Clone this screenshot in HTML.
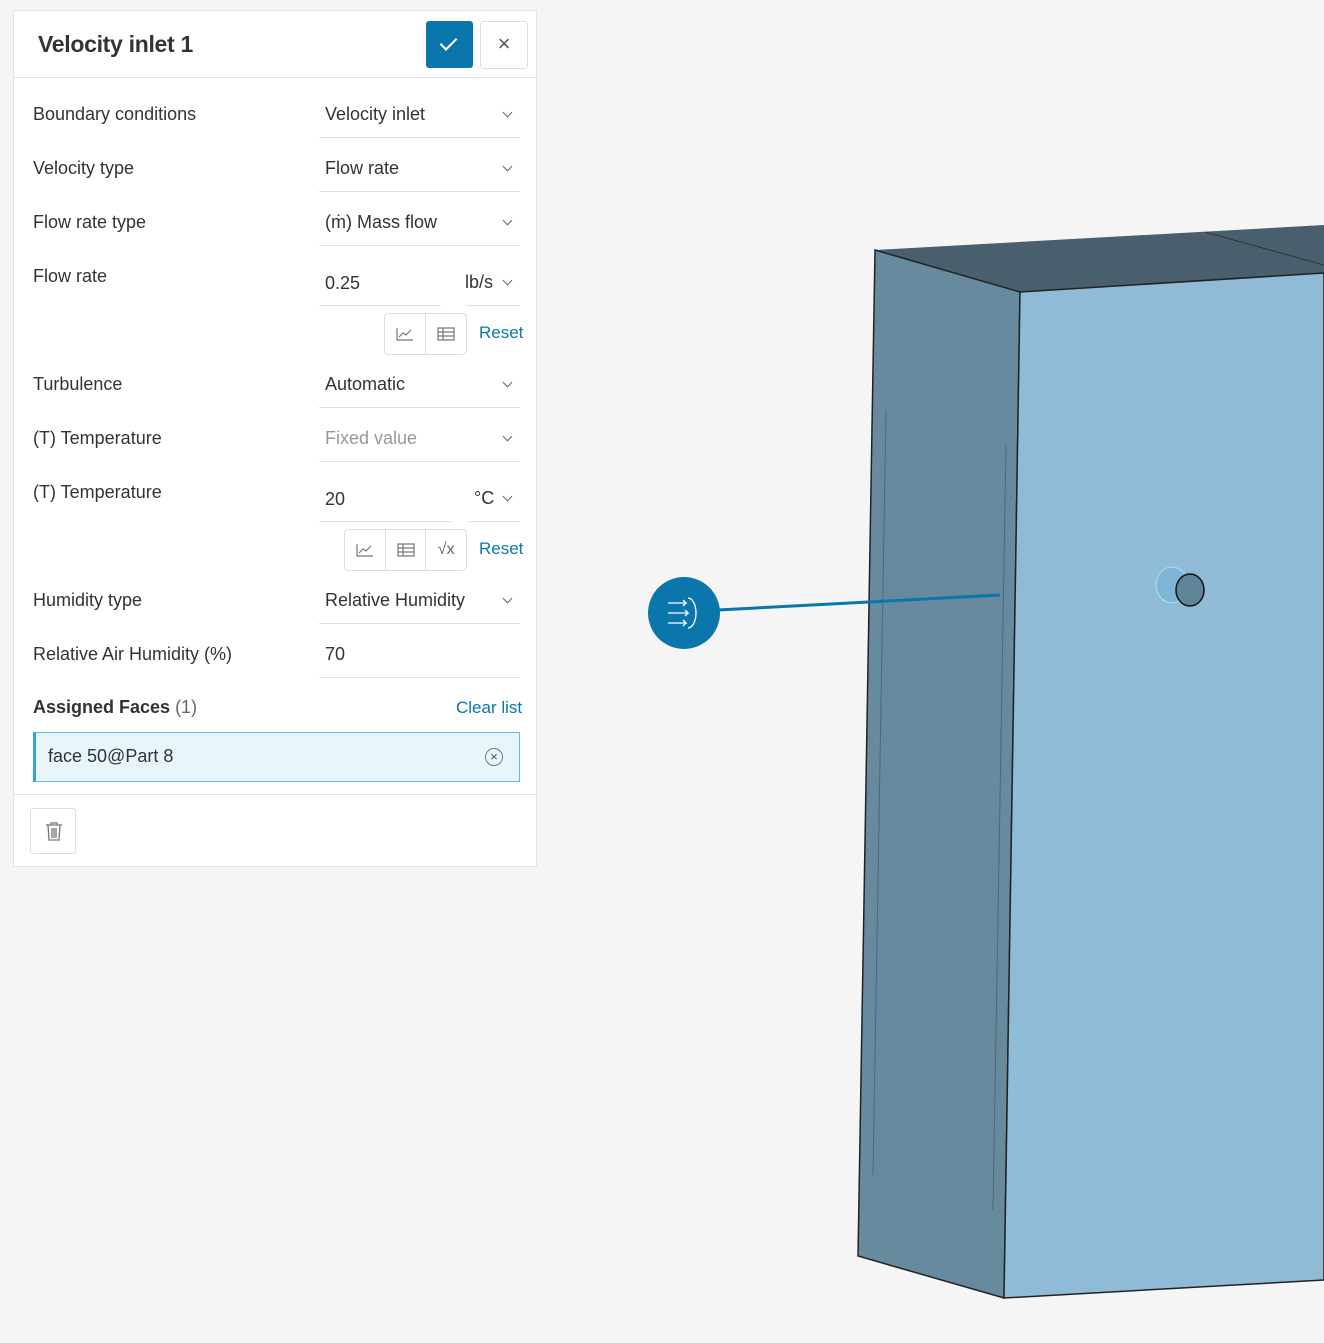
<!DOCTYPE html>
<html><head><style>
body{margin:0;width:1324px;height:1343px;background:#f5f5f5;font-family:"Liberation Sans",sans-serif;position:relative;overflow:hidden;color:#333}
.p{position:absolute;left:13px;top:10px;width:524px;height:857px;background:#fff;border:1px solid #e4e4e4;box-sizing:border-box}
.a{position:absolute;white-space:nowrap}
.l{left:19px;font-size:18px;color:#333}
.v{left:311px;font-size:18px;color:#333}
.u{position:absolute;height:1px;background:#e0e0e0}
.ch{position:absolute;width:6px;height:6px;border-right:1.3px solid #666;border-bottom:1.3px solid #666;transform:rotate(45deg)}
.bg{position:absolute;border:1px solid #ddd;border-radius:4px;height:40px;display:flex}
.bg div{width:40px;border-right:1px solid #ddd;display:flex;align-items:center;justify-content:center;color:#666;font-size:14px}
.bg div:last-child{border-right:none}
.r{color:#0a76ab;font-size:17px}
</style></head><body>
<svg style="position:absolute;left:0;top:0" width="1324" height="1343">
<polygon points="875,250 1324,225 1324,273 1020,292" fill="#4a5f6e"/>
<line x1="1205" y1="232" x2="1324" y2="265" stroke="#333" stroke-width="1"/>
<polygon points="875,250 1020,292 1004,1298 858,1256" fill="#678a9e" stroke="#222" stroke-width="1.5"/>
<polygon points="1020,292 1324,273 1324,1280 1004,1298" fill="#8fbbd7" stroke="#222" stroke-width="1.5"/>
<line x1="886" y1="410" x2="873" y2="1175" stroke="#4d6878"/>
<line x1="1006" y1="445" x2="993" y2="1210" stroke="#4d6878"/>
<line x1="718" y1="610" x2="1000" y2="595" stroke="#0a76ab" stroke-width="3"/>
<circle cx="684" cy="613" r="36" fill="#0a76ab"/>
<g stroke="#fff" fill="none" stroke-width="1.3"><path d="M668 603h18l-3-3M683 606l3-3M668 613h20l-3-3M685 616l3-3M668 623h18l-3-3M683 626l3-3"/><path d="M688 598a8 15 0 0 1 0 30"/></g>
<ellipse cx="1172" cy="585" rx="16" ry="18" fill="#6fb2d8" fill-opacity=".5" stroke="#b8dcef"/>
<ellipse cx="1190" cy="590" rx="14" ry="16" fill="#5f8498" stroke="#111" stroke-width="1.5"/>
</svg>
<div class="p">
<div class="a" style="left:24px;top:20px;font-size:23px;font-weight:bold;color:#333;letter-spacing:-0.3px">Velocity inlet 1</div>
<div class="a" style="left:412px;top:10px;width:47px;height:47px;background:#0a76ab;border-radius:3px"><div class="ch" style="left:18px;top:13px;width:7px;height:14px;border-color:#fff;border-width:0 2px 2px 0"></div></div>
<div class="a" style="left:466px;top:10px;width:46px;height:46px;border:1px solid #ddd;border-radius:3px;font-size:22px;color:#555;text-align:center;line-height:44px">×</div>
<div class="u" style="left:0;top:66px;width:522px"></div>

<div class="a l" style="top:93px">Boundary conditions</div><div class="a v" style="top:93px">Velocity inlet</div><div class="u" style="left:305px;top:126px;width:201px"></div><div class="ch" style="left:490px;top:98px"></div>
<div class="a l" style="top:147px">Velocity type</div><div class="a v" style="top:147px">Flow rate</div><div class="u" style="left:305px;top:180px;width:201px"></div><div class="ch" style="left:490px;top:152px"></div>
<div class="a l" style="top:201px">Flow rate type</div><div class="a v" style="top:201px">(ṁ) Mass flow</div><div class="u" style="left:305px;top:234px;width:201px"></div><div class="ch" style="left:490px;top:206px"></div>
<div class="a l" style="top:255px">Flow rate</div><div class="a v" style="top:262px">0.25</div><div class="a v" style="left:451px;top:261px">lb/s</div><div class="u" style="left:305px;top:294px;width:122px"></div><div class="u" style="left:453px;top:294px;width:53px"></div><div class="ch" style="left:490px;top:266px"></div>
<div class="bg" style="left:370px;top:302px;width:81px"><div><svg width="18" height="14"><path d="M1 1v12h16M3 10l4-4 3 2 5-5" stroke="#777" fill="none" stroke-width="1.2"/></svg></div><div><svg width="18" height="14"><path d="M1 1h16v12H1zM1 5h16M1 9h16M6 1v12" stroke="#777" fill="none" stroke-width="1.2"/></svg></div></div><div class="a r" style="left:465px;top:312px">Reset</div>
<div class="a l" style="top:363px">Turbulence</div><div class="a v" style="top:363px">Automatic</div><div class="u" style="left:305px;top:396px;width:201px"></div><div class="ch" style="left:490px;top:368px"></div>
<div class="a l" style="top:417px">(T) Temperature</div><div class="a v" style="top:417px;color:#999">Fixed value</div><div class="u" style="left:305px;top:450px;width:201px"></div><div class="ch" style="left:490px;top:422px"></div>
<div class="a l" style="top:471px">(T) Temperature</div><div class="a v" style="top:478px">20</div><div class="a v" style="left:460px;top:477px">°C</div><div class="u" style="left:305px;top:510px;width:132px"></div><div class="u" style="left:455px;top:510px;width:51px"></div><div class="ch" style="left:490px;top:482px"></div>
<div class="bg" style="left:330px;top:518px;width:121px"><div><svg width="18" height="14"><path d="M1 1v12h16M3 10l4-4 3 2 5-5" stroke="#777" fill="none" stroke-width="1.2"/></svg></div><div><svg width="18" height="14"><path d="M1 1h16v12H1zM1 5h16M1 9h16M6 1v12" stroke="#777" fill="none" stroke-width="1.2"/></svg></div><div style="font-size:16px">√x</div></div><div class="a r" style="left:465px;top:528px">Reset</div>
<div class="a l" style="top:579px">Humidity type</div><div class="a v" style="top:579px">Relative Humidity</div><div class="u" style="left:305px;top:612px;width:201px"></div><div class="ch" style="left:490px;top:584px"></div>
<div class="a l" style="top:633px">Relative Air Humidity (%)</div><div class="a v" style="top:633px">70</div><div class="u" style="left:305px;top:666px;width:201px"></div>
<div class="a l" style="top:686px;font-weight:bold">Assigned Faces <span style="font-weight:normal;color:#666">(1)</span></div><div class="a r" style="left:442px;top:687px">Clear list</div>
<div class="a" style="left:19px;top:721px;width:487px;height:50px;box-sizing:border-box;background:#e8f5fb;border:1px solid #5bbde6;border-left:3px solid #2aa6dc"></div>
<div class="a" style="left:34px;top:735px;font-size:18px">face 50@Part 8</div>
<div class="a" style="left:471px;top:737px;width:16px;height:16px;border:1px solid #777;border-radius:50%;font-size:13px;line-height:16px;text-align:center;color:#555">×</div>
<div class="u" style="left:0;top:783px;width:522px"></div>
<div class="a" style="left:16px;top:797px;width:46px;height:46px;border:1px solid #ddd;border-radius:3px;box-sizing:border-box">
<svg width="46" height="46"><g stroke="#777" fill="none" stroke-width="1.3"><path d="M15 16h16M20 16v-2h6v2M17 16l1 15h10l1-15M21 19v10M23 19v10M25 19v10"/></g></svg></div>
</div>
</body></html>
